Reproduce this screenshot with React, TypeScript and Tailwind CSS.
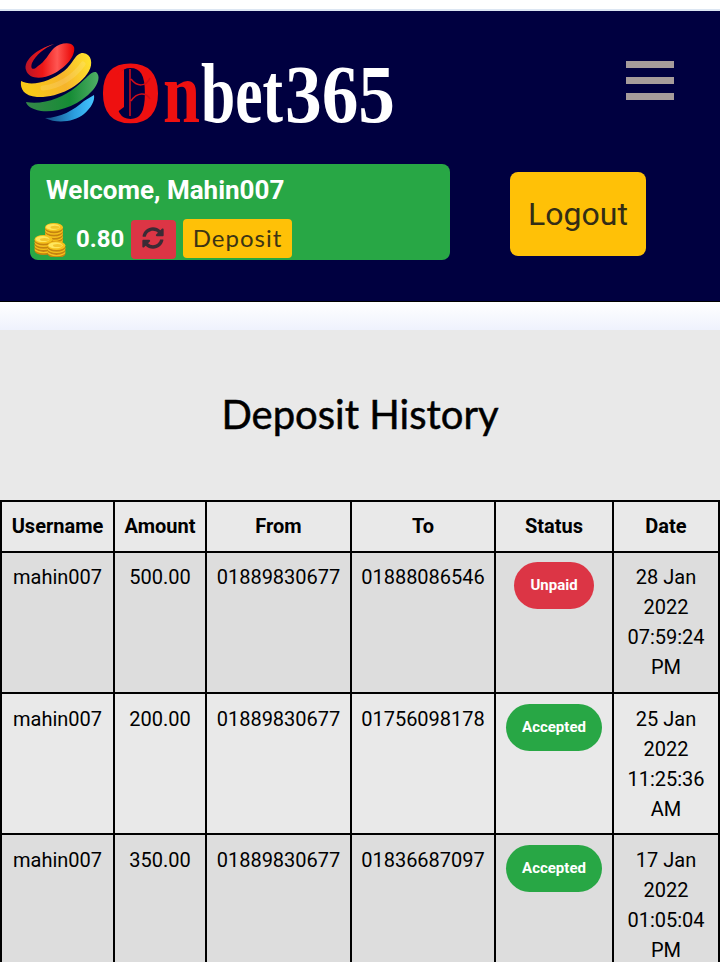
import React from "react";
import { FaSyncAlt } from "react-icons/fa";

type Row = { amount: string; to: string; status: "Unpaid" | "Accepted"; date: string[] };

const rows: Row[] = [
  { amount: "500.00", to: "01888086546", status: "Unpaid", date: ["28 Jan", "2022", "07:59:24", "PM"] },
  { amount: "200.00", to: "01756098178", status: "Accepted", date: ["25 Jan", "2022", "11:25:36", "AM"] },
  { amount: "350.00", to: "01836687097", status: "Accepted", date: ["17 Jan", "2022", "01:05:04", "PM"] },
];

const headings = ["Username", "Amount", "From", "To", "Status", "Date"];
const grid = "grid grid-cols-[113px_92px_145px_144px_118px_106px] border-l-2 border-black";
const cell = "border-r-2 border-b-2 border-black text-center";

function Logo() {
  return (
    <svg width="380" height="90" viewBox="18 38 380 90" className="shrink-0 overflow-visible">
      <defs>
        <linearGradient id="red" x1="0" y1="0" x2="1" y2="0">
          <stop offset="0" stopColor="#b81428" />
          <stop offset=".35" stopColor="#ee1717" />
          <stop offset=".65" stopColor="#ff5652" />
          <stop offset="1" stopColor="#e80000" />
        </linearGradient>
        <linearGradient id="yellow" x1="0" y1=".2" x2="1" y2="0">
          <stop offset="0" stopColor="#f8ca18" />
          <stop offset=".5" stopColor="#f6b42a" />
          <stop offset="1" stopColor="#ffe62d" />
        </linearGradient>
        <linearGradient id="green" x1="0" y1="0" x2="1" y2="0">
          <stop offset="0" stopColor="#36884a" />
          <stop offset=".6" stopColor="#168c35" />
          <stop offset="1" stopColor="#4fae66" />
        </linearGradient>
        <linearGradient id="blue" x1="0" y1="0" x2="1" y2="0">
          <stop offset="0" stopColor="#144b80" />
          <stop offset=".6" stopColor="#2b9fdf" />
          <stop offset="1" stopColor="#45c4ff" />
        </linearGradient>
      </defs>
      <path d="M54 44 C36 49 23 61 26 70 C29 80 43 79 53 74 C67 67 76 55 74 47 C71 41 60 43 54 48 C49 53 45 62 38 66 C33 71 30 69 32 63 C36 55 44 48 54 44Z" fill="url(#red)" />
      <path d="M21 81 C32 87 51 81 64 71 C74 63 75 53 83 53 C92 54 93 64 89 71 C80 87 57 98 37 97 C24 96 20 89 21 81Z" fill="url(#yellow)" />
      <path d="M26 102 C43 105 63 98 76 87 C88 77 91 71 96 72 C101 76 98 84 93 90 C79 106 57 113 41 111 C31 109 27 106 26 102Z" fill="url(#green)" />
      <path d="M45 118 C60 118 74 110 84 101 L94 95 C95 101 91 108 84 114 C74 122 57 124 45 118Z" fill="url(#blue)" />
      <path d="M43 88 C58 87 74 77 83 64" fill="none" stroke="#fff" strokeOpacity=".13" strokeWidth="5" strokeLinecap="round" />
      <g fontFamily='"Liberation Serif", serif' fontWeight="700">
        <text x="99" y="122" fontSize="88" fill="#ee1010" textLength="63" lengthAdjust="spacingAndGlyphs">O</text>
        <text x="163" y="122" fontSize="86" fill="#ee1010" textLength="37" lengthAdjust="spacingAndGlyphs">n</text>
        <text x="201" y="122" fontSize="84" fill="#fff" textLength="82" lengthAdjust="spacingAndGlyphs">bet</text>
        <text x="285" y="122" fontSize="82" fill="#fff" textLength="110" lengthAdjust="spacingAndGlyphs">365</text>
      </g>
      <path d="M130 69V116 M131 79C137 87 146 87 150 78 M131 101C137 92 146 92 150 99" fill="none" stroke="#d00c19" strokeWidth="1.5" />
      <path d="M124 69V107L116 113V75Z" fill="#ee1010" />
    </svg>
  );
}

function CoinStack({ x, y, n }: { x: number; y: number; n: number }) {
  return (
    <g>
      {Array.from({ length: n }, (_, i) => {
        const cy = y - i * 3.2;
        return (
          <g key={i}>
            <ellipse cx={x} cy={cy + 1.6} rx="9" ry="4.5" fill="#c5830f" />
            <ellipse cx={x} cy={cy} rx="9" ry="4.3" fill="#f6c11c" />
            <ellipse cx={x - 1} cy={cy - 0.3} rx="7" ry="3" fill="#ffe65e" />
            <ellipse cx={x + 1} cy={cy} rx="4.5" ry="1.5" fill="#f2c42c" />
          </g>
        );
      })}
    </g>
  );
}

export default function App() {
  return (
    <div className="flex h-[962px] w-[720px] flex-col overflow-hidden bg-white font-['Roboto',sans-serif]">
      <div className="h-[11px] shrink-0 border-b-2 border-[#dce6f2] bg-white" />
      <header className="h-[291px] shrink-0 border-b border-black bg-[#000040]">
        <div className="flex h-[153px] items-start justify-between pt-[27px] pr-[46px] pl-[18px]">
          <Logo />
          <button className="mt-[23px] flex w-[49px] flex-col gap-[9px] px-[0.5px]" aria-label="Menu">
            <span className="h-[7px] w-full bg-[#a69c9b]" />
            <span className="h-[7px] w-full bg-[#a69c9b]" />
            <span className="h-[7px] w-full bg-[#a69c9b]" />
          </button>
        </div>
        <div className="flex items-start gap-[60px] pl-[30px]">
          <div className="h-24 w-[420px] rounded-lg bg-[#28a745] text-white">
            <div className="h-[55px] pt-2 pl-4 text-[26px] leading-9 font-bold">
              <span className="inline-block w-max">Welcome, Mahin007</span>
            </div>
            <div className="flex items-start">
              <svg width="36" height="38" viewBox="0 0 36 38" className="ml-[3px]">
                <CoinStack x={21} y={21} n={5} />
                <CoinStack x={10.5} y={30} n={4} />
                <CoinStack x={23.5} y={33} n={3} />
              </svg>
              <span className="ml-[7px] w-[55px] text-2xl leading-10 font-bold">0.80</span>
              <button className="mt-px flex h-[39px] w-[45px] items-center justify-center rounded bg-[#dc3545] text-[#3b2b35]" aria-label="Refresh">
                <FaSyncAlt size={22} className="-mt-[3px] mr-[2px]" />
              </button>
              <button className="ml-[7px] h-[39px] w-[109px] rounded bg-[#ffc107] font-['Lato',sans-serif] text-2xl leading-[37px] tracking-[1px] text-[#3c3414]">
                <span className="block h-[39px]">Deposit</span>
              </button>
            </div>
          </div>
          <button className="mt-2 h-[84px] w-[136px] rounded-lg bg-[#ffc107] text-[32px] leading-[84px] text-[#332d16]">
            Logout
          </button>
        </div>
      </header>
      <div className="h-7 shrink-0 bg-linear-to-b from-white to-[#eff2fd]" />
      <main className="flex-1 bg-[#e9e9e9] text-black">
        <h1 className="h-[170px] pt-[60px] text-center font-['Lato',sans-serif] text-[40px] leading-[48px] [-webkit-text-stroke:0.5px_black]">
          Deposit History
        </h1>
        <div className="border-t-2 border-black text-xl leading-[30px]">
          <div className={grid}>
            {headings.map((h) => (
              <div key={h} className={`${cell} h-[51px] pt-[9px] font-bold`}>{h}</div>
            ))}
          </div>
          {rows.map((r, i) => {
            const c = `${cell} ${i === 0 ? "pt-[9px]" : "pt-[10px]"}`;
            return (
              <div key={r.to} className={`${grid} ${i % 2 === 0 ? "bg-[#dddddd]" : ""}`}>
                <div className={`${c} h-[141px]`}>mahin007</div>
                <div className={c}>{r.amount}</div>
                <div className={c}>01889830677</div>
                <div className={c}>{r.to}</div>
                <div className={c}>
                  <span
                    className={`inline-block h-[47px] rounded-full px-4 text-[15px] leading-[47px] font-bold text-white ${
                      r.status === "Unpaid" ? "bg-[#dc3545]" : "bg-[#28a745]"
                    }`}
                  >
                    {r.status}
                  </span>
                </div>
                <div className={c}>
                  {r.date.map((d) => (
                    <div key={d}>{d}</div>
                  ))}
                </div>
              </div>
            );
          })}
        </div>
      </main>
    </div>
  );
}
